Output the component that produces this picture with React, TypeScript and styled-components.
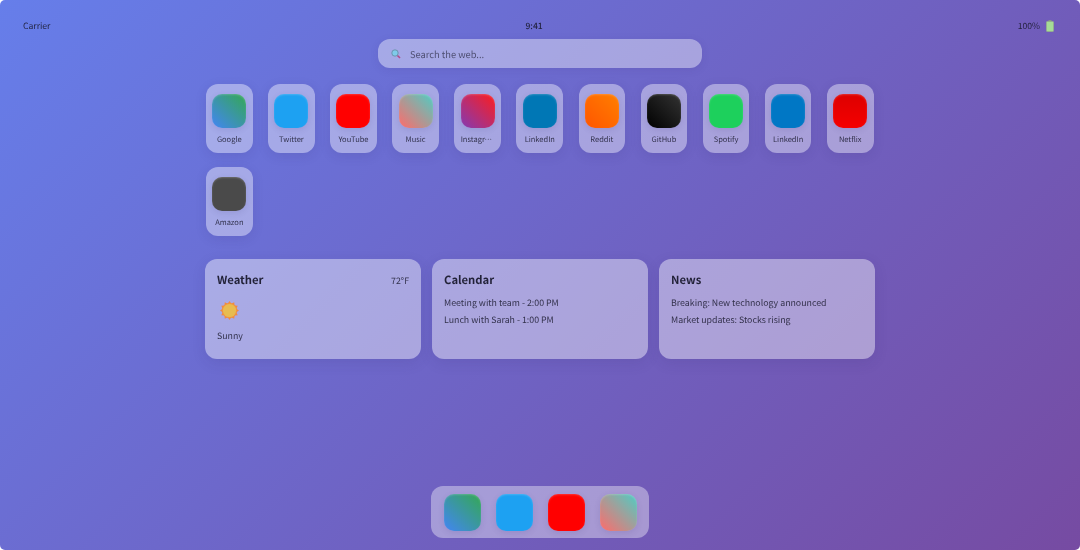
import React from "react";
import styled, { createGlobalStyle } from "styled-components";

const Global = createGlobalStyle`
  html, body { margin: 0; padding: 0; background: #fff; }
  body {
    font-family: "Noto Sans CJK SC", "Noto Sans", sans-serif;
    text-rendering: geometricPrecision;
  }
`;

const Screen = styled.div`
  width: 1080px;
  height: 550px;
  border-radius: 5px;
  overflow: hidden;
  background: linear-gradient(135deg, #667eea 0%, #764ba2 100%);
  display: flex;
  flex-direction: column;
  align-items: center;
  color: #2a2a3c;
  filter: blur(0.4px);
`;

const StatusBar = styled.div`
  width: 100%;
  box-sizing: border-box;
  padding: 18px 26px 0 23px;
  height: 39px;
  display: flex;
  justify-content: space-between;
  font-size: 8.6px;
  line-height: 16px;
  color: rgba(26, 26, 46, 0.9);
`;

const StatusTime = styled.span`
  font-weight: 500;
`;

const StatusRight = styled.span`
  display: flex;
  gap: 6px;
`;

const BatteryIcon = styled.svg`
  margin-top: 2px;
`;

const SearchBar = styled.div`
  width: 324px;
  height: 29px;
  box-sizing: border-box;
  border-radius: 12px;
  padding-left: 13px;
  background: rgba(255, 255, 255, 0.4);
  display: flex;
  align-items: center;
  gap: 9px;
  font-size: 9.3px;
  color: rgba(26, 26, 46, 0.65);
  box-shadow: 0 2px 8px rgba(60, 40, 120, 0.1);
`;

const Grid = styled.div`
  width: 668px;
  margin-top: 16px;
  display: flex;
  flex-wrap: wrap;
  gap: 14px 15.5px;
`;

const AppTile = styled.div`
  width: 46.6px;
  height: 69px;
  box-sizing: border-box;
  padding-top: 10px;
  border-radius: 12px;
  background: rgba(255, 255, 255, 0.4);
  box-shadow: 0 3px 12px rgba(50, 40, 110, 0.12);
  display: flex;
  flex-direction: column;
  align-items: center;
  gap: 6px;
`;

const AppIcon = styled.div<{ $bg: string; $size?: number }>`
  width: ${(p) => p.$size ?? 34}px;
  height: ${(p) => p.$size ?? 34}px;
  flex-shrink: 0;
  border-radius: 10px;
  background: ${(p) => p.$bg};
  box-shadow: inset 0 1px 2px rgba(255, 255, 255, 0.2), 0 2px 6px rgba(50, 40, 110, 0.12);
  filter: blur(0.6px);
`;

const AppLabel = styled.span`
  width: 34px;
  font-size: 7.5px;
  line-height: 12px;
  text-align: center;
  white-space: nowrap;
  overflow: hidden;
  text-overflow: ellipsis;
  color: rgba(26, 26, 46, 0.85);
`;

const Widgets = styled.div`
  width: 670px;
  margin-top: 23px;
  display: grid;
  grid-template-columns: repeat(3, 216px);
  gap: 11px;
`;

const Widget = styled.div`
  height: 99.5px;
  box-sizing: border-box;
  padding: 12px;
  border-radius: 12px;
  background: rgba(255, 255, 255, 0.42);
  box-shadow: 0 4px 14px rgba(50, 40, 110, 0.12);
  font-size: 8.8px;
  line-height: 17px;
  color: rgba(26, 26, 46, 0.85);
`;

const WidgetHead = styled.div`
  display: flex;
  justify-content: space-between;
  align-items: center;
  height: 18px;
  margin-bottom: 5px;
`;

const WidgetTitle = styled.span`
  font-size: 11.25px;
  font-weight: 700;
  color: rgba(26, 26, 46, 0.95);
`;

const Temp = styled.span`
  font-size: 8.8px;
`;

const SunWrap = styled.div`
  height: 32px;
  display: flex;
  align-items: center;
  padding-left: 3px;
  margin-bottom: 1px;
`;

const Dock = styled.div`
  margin-top: auto;
  margin-bottom: 12px;
  padding: 0 12.5px;
  width: 218px;
  height: 52px;
  box-sizing: border-box;
  border-radius: 12px;
  background: rgba(255, 255, 255, 0.38);
  display: flex;
  justify-content: space-between;
  align-items: center;
`;

const apps: [string, string][] = [
  ["Google", "linear-gradient(45deg, #4285f4, #34a853)"],
  ["Twitter", "#1da1f2"],
  ["YouTube", "#ff0000"],
  ["Music", "linear-gradient(45deg, #ff6b6b, #4ecdc4)"],
  ["Instagram", "linear-gradient(45deg, #833ab4, #fd1d1d)"],
  ["LinkedIn", "#0077b5"],
  ["Reddit", "linear-gradient(45deg, #ff5500, #ff7f00)"],
  ["GitHub", "linear-gradient(45deg, #000, #333)"],
  ["Spotify", "#1dd05c"],
  ["LinkedIn", "#0077c5"],
  ["Netflix", "linear-gradient(#dd0000, #f50000)"],
  ["Amazon", "#4a4a4a"],
];

const SearchIcon = () => (
  <svg width="10" height="10" viewBox="0 0 10 10">
    <line x1="6.2" y1="6.2" x2="9" y2="9" stroke="#b04a8a" strokeWidth="1.6" />
    <circle cx="4" cy="4" r="3.2" fill="#7fcbea" stroke="#6a8fa8" strokeWidth="0.9" />
  </svg>
);

const Battery = () => (
  <BatteryIcon width="8" height="12" viewBox="0 0 8 12">
    <rect x="2.5" y="0" width="3" height="1.5" fill="#8a9a80" />
    <rect x="0.5" y="1.5" width="7" height="10" rx="0.8" fill="#a6dc96" stroke="#93ac90" />
  </BatteryIcon>
);

const Sun = () => (
  <svg width="19" height="19" viewBox="0 0 19 19">
    {Array.from({ length: 12 }, (_, i) => (
      <polygon key={i} points="9.5,0 11.6,3 7.4,3" fill="#f08a40" transform={`rotate(${i * 30} 9.5 9.5)`} />
    ))}
    <circle cx="9.5" cy="9.5" r="7.6" fill="#f09440" />
    <circle cx="9.5" cy="9.5" r="6.6" fill="#e8bc50" />
  </svg>
);

export default function App() {
  return (
    <>
      <Global />
      <Screen>
        <StatusBar>
          <span>Carrier</span>
          <StatusTime>9:41</StatusTime>
          <StatusRight>
            100%
            <Battery />
          </StatusRight>
        </StatusBar>
        <SearchBar>
          <SearchIcon />
          Search the web...
        </SearchBar>
        <Grid>
          {apps.map(([name, bg], i) => (
            <AppTile key={i}>
              <AppIcon $bg={bg} />
              <AppLabel>{name}</AppLabel>
            </AppTile>
          ))}
        </Grid>
        <Widgets>
          <Widget>
            <WidgetHead>
              <WidgetTitle>Weather</WidgetTitle>
              <Temp>72°F</Temp>
            </WidgetHead>
            <SunWrap>
              <Sun />
            </SunWrap>
            <div>Sunny</div>
          </Widget>
          <Widget>
            <WidgetHead>
              <WidgetTitle>Calendar</WidgetTitle>
            </WidgetHead>
            <div>Meeting with team - 2:00 PM</div>
            <div>Lunch with Sarah - 1:00 PM</div>
          </Widget>
          <Widget>
            <WidgetHead>
              <WidgetTitle>News</WidgetTitle>
            </WidgetHead>
            <div>Breaking: New technology announced</div>
            <div>Market updates: Stocks rising</div>
          </Widget>
        </Widgets>
        <Dock>
          {apps.slice(0, 4).map(([name, bg]) => (
            <AppIcon key={name} $bg={bg} $size={37} />
          ))}
        </Dock>
      </Screen>
    </>
  );
}
